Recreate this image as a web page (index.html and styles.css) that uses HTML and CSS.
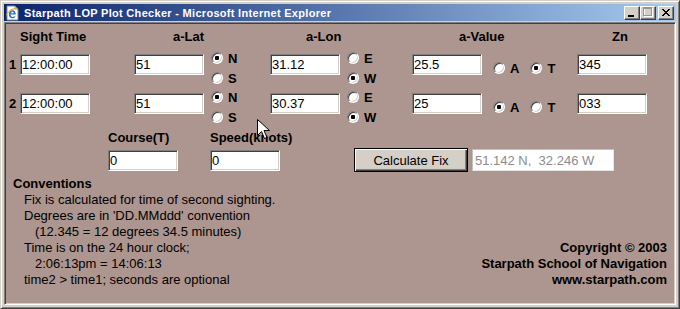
FILE: index.html
```html
<!DOCTYPE html>
<html lang="en">
<head>
  <meta charset="UTF-8">
  <meta name="viewport" content="width=device-width, initial-scale=1.0">
  <title>Starpath LOP Plot Checker</title>
  <link rel="stylesheet" href="styles.css">
</head>
<body>

  <div class="window">
    <div class="titlebar">
      <svg class="ie-icon" width="16" height="16" viewBox="0 0 16 16">
        <path d="M2 1h8l3 3v11H2z" fill="#fff" stroke="#7b8a9c"/>
        <path d="M10 1v3h3" fill="none" stroke="#7b8a9c"/>
        <path d="M4.2 9.4h6.6c0-2.6-1.4-4.2-3.4-4.2s-3.6 1.7-3.6 4c0 2.4 1.6 4 3.7 4 1.4 0 2.5-.7 3.1-1.8H8.5c-.3.4-.6.6-1.1.6-.9 0-1.6-.8-1.6-1.9 0 0 0 0 0 0zM5.9 8.3c.1-.9.7-1.5 1.5-1.5s1.4.6 1.5 1.5z" fill="#1e6fd9"/>
        <path d="M1 11c1-3 6-6.5 11-7.5-1.5-1.2-5-.5-8 2.3C2 7.6.6 9.6 1 11z" fill="#f2b01e"/>
      </svg>
      <span class="title">Starpath LOP Plot Checker - Microsoft Internet Explorer</span>
      <div class="caption-buttons">
        <span class="cap-btn">
          <svg width="14" height="12" viewBox="0 0 14 12"><rect x="3" y="8" width="6" height="2" fill="#000"/></svg>
        </span>
        <span class="cap-btn">
          <svg width="14" height="12" viewBox="0 0 14 12">
            <rect x="3.5" y="1.5" width="8" height="8" fill="none" stroke="#fff"/>
            <rect x="2.5" y="0.5" width="8" height="8" fill="none" stroke="#9a968f"/>
            <rect x="3" y="1" width="7" height="1" fill="#9a968f"/>
          </svg>
        </span>
        <span class="cap-btn close">
          <svg width="14" height="12" viewBox="0 0 14 12"><path d="M3 2l7 7M4 2l7 7M10 2l-7 7M11 2l-7 7" stroke="#000" stroke-width="1"/></svg>
        </span>
      </div>
    </div>

    <div class="content">
      <form class="sights">
        <div class="head c-time">Sight Time</div>
        <div class="head c-lat h-lat">a-Lat</div>
        <div class="head c-lon h-lon">a-Lon</div>
        <div class="head c-val h-val">a-Value</div>
        <div class="head c-zn h-zn">Zn</div>

        <div class="num c-num">1</div>
        <input class="field c-time" type="text" value="12:00:00">
        <input class="field c-lat" type="text" value="51">
        <div class="opts c-latdir">
          <label class="opt"><input type="radio" name="lat1" checked> N</label>
          <label class="opt"><input type="radio" name="lat1"> S</label>
        </div>
        <input class="field c-lon" type="text" value="31.12">
        <div class="opts c-londir">
          <label class="opt"><input type="radio" name="lon1"> E</label>
          <label class="opt"><input type="radio" name="lon1" checked> W</label>
        </div>
        <input class="field c-val" type="text" value="25.5">
        <div class="opts-row c-valtype">
          <label class="opt"><input type="radio" name="val1"> A</label>
          <label class="opt"><input type="radio" name="val1" checked> T</label>
        </div>
        <input class="field c-zn" type="text" value="345">

        <div class="num c-num">2</div>
        <input class="field c-time" type="text" value="12:00:00">
        <input class="field c-lat" type="text" value="51">
        <div class="opts c-latdir">
          <label class="opt"><input type="radio" name="lat2" checked> N</label>
          <label class="opt"><input type="radio" name="lat2"> S</label>
        </div>
        <input class="field c-lon" type="text" value="30.37">
        <div class="opts c-londir">
          <label class="opt"><input type="radio" name="lon2"> E</label>
          <label class="opt"><input type="radio" name="lon2" checked> W</label>
        </div>
        <input class="field c-val" type="text" value="25">
        <div class="opts-row c-valtype">
          <label class="opt"><input type="radio" name="val2" checked> A</label>
          <label class="opt"><input type="radio" name="val2"> T</label>
        </div>
        <input class="field c-zn" type="text" value="033">
      </form>

      <div class="course">
        <div class="head">Course(T)</div>
        <div class="head">Speed(knots)</div>
        <div></div>
        <div></div>
        <input class="field" type="text" value="0">
        <input class="field" type="text" value="0">
        <button class="calc" type="button">Calculate Fix</button>
        <input class="result" type="text" value="51.142 N,  32.246 W" readonly>
      </div>

      <div class="footer">
        <div class="conventions">
          <div class="conv-title">Conventions</div>
          <div class="ind1">Fix is calculated for time of second sighting.</div>
          <div class="ind1">Degrees are in 'DD.MMddd' convention</div>
          <div class="ind2">(12.345 = 12 degrees 34.5 minutes)</div>
          <div class="ind1">Time is on the 24 hour clock;</div>
          <div class="ind2">2:06:13pm = 14:06:13</div>
          <div class="ind1">time2 &gt; time1; seconds are optional</div>
        </div>
        <div class="copyright">
          <div>Copyright &copy; 2003</div>
          <div>Starpath School of Navigation</div>
          <div>www.starpath.com</div>
        </div>
      </div>
    </div>

    <!-- mouse pointer -->
    <svg class="pointer" width="13" height="21" viewBox="0 0 13 21">
      <path d="M.5.5v16l4-4 3 7 2.5-1-3-7h5.5z" fill="#fff" stroke="#000"/>
    </svg>
  </div>

</body>
</html>
```

FILE: styles.css
```css
body {
  margin: 0;
  padding: 0;
  font-family: "Liberation Sans", Arial, sans-serif;
  font-size: 13px;
  color: #000;
}
.window {
  position: relative;
  width: 680px;
  height: 309px;
  box-sizing: border-box;
  background: #d4d0c8;
  border: 1px solid;
  border-color: #d4d0c8 #404040 #404040 #d4d0c8;
  box-shadow: inset 1px 1px #fff, inset -1px -1px #808080;
  padding: 3px;
  display: flex;
  flex-direction: column;
}
.titlebar {
  height: 17px;
  display: flex;
  align-items: center;
  background: linear-gradient(to right, #0a246a, #a6caf0);
  color: #fff;
  margin-bottom: 1px;
}
.ie-icon {
  margin: 0 3px 0 1px;
}
.title {
  font-family: "Liberation Sans", Arial, sans-serif;
  font-weight: bold;
  font-size: 11px;
  letter-spacing: 0.3px;
  white-space: nowrap;
}
.caption-buttons {
  margin-left: auto;
  display: flex;
  margin-right: 2px;
}
.cap-btn {
  width: 16px;
  height: 14px;
  box-sizing: border-box;
  background: #d4d0c8;
  border: 1px solid;
  border-color: #fff #404040 #404040 #fff;
  box-shadow: inset -1px -1px #808080;
  display: flex;
}
.cap-btn.close {
  margin-left: 2px;
}
.content {
  flex: 1;
  background: #ad968f;
  border: 1px solid;
  border-color: #808080 #fff #fff #808080;
  box-shadow: inset 1px 1px #404040, inset -1px -1px #d4d0c8;
  padding: 6px 1px 0 1px;
}
.head {
  font-weight: bold;
  line-height: 16px;
  white-space: nowrap;
}
.sights {
  margin: 0;
  display: grid;
  grid-template-columns: 14px 70px 44px 70px 7px 59px 70px 7px 65px 70px 95px 70px;
  grid-template-rows: 19px 39px 39px;
  align-items: start;
}
.c-num { grid-column: 1; }
.c-time { grid-column: 2; }
.c-lat { grid-column: 4; }
.c-latdir { grid-column: 6; }
.c-lon { grid-column: 7; }
.c-londir { grid-column: 9; }
.c-val { grid-column: 10; }
.c-valtype { grid-column: 11; }
.c-zn { grid-column: 12; }
.h-lat { padding-left: 39px; }
.h-lon { padding-left: 36px; }
.h-val { padding-left: 47px; }
.h-zn { padding-left: 35px; }
.num {
  font-weight: bold;
  line-height: 21px;
  margin-top: 6px;
  padding-left: 3px;
}
.field {
  width: 70px;
  height: 21px;
  box-sizing: border-box;
  margin: 6px 0 0 0;
  padding: 0 1px;
  border: 1px solid;
  border-color: #808080 #fff #fff #808080;
  box-shadow: inset 1px 1px #404040, inset -1px -1px #d4d0c8;
  background: #fff;
  font-family: "Liberation Sans", Arial, sans-serif;
  font-size: 13px;
  color: #000;
  outline: none;
}
.opts {
  display: flex;
  flex-direction: column;
}
.opts-row {
  height: 40px;
  display: flex;
  align-items: center;
  padding-left: 11px;
  gap: 11px;
}
.opt {
  display: flex;
  align-items: center;
  height: 20px;
  gap: 5px;
  font-weight: bold;
}
.opt input {
  appearance: none;
  -webkit-appearance: none;
  width: 12px;
  height: 12px;
  margin: 0;
  box-sizing: border-box;
  border-radius: 50%;
  border: 1px solid;
  border-color: #808080 #fff #fff #808080;
  box-shadow: inset 1px 1px #404040, inset -1px -1px #d4d0c8;
  background: #fff;
}
.opt input:checked {
  background: radial-gradient(circle, #000 0 2px, #fff 2.5px);
}
.course {
  display: grid;
  grid-template-columns: 102px 144px 118px 142px;
  grid-template-rows: 16px 24px;
  row-gap: 2px;
  align-items: center;
  padding-left: 102px;
  margin-top: 4px;
}
.course .field {
  margin: 0;
}
.calc {
  width: 114px;
  height: 24px;
  padding: 0;
  background: #d4d0c8;
  border: 1px solid #000;
  box-shadow: inset 1px 1px #fff, inset -1px -1px #404040, inset -2px -2px #808080;
  font-family: "Liberation Sans", Arial, sans-serif;
  font-size: 13px;
  color: #000;
}
.result {
  width: 142px;
  height: 22px;
  box-sizing: border-box;
  margin: 0;
  padding: 0 2px;
  border: 1px solid;
  border-color: #c4c0bc #e8e6e2 #e8e6e2 #c4c0bc;
  background: #fff;
  font-family: "Liberation Sans", Arial, sans-serif;
  font-size: 13px;
  color: #8c8c8c;
  outline: none;
}
.footer {
  display: flex;
  justify-content: space-between;
  align-items: flex-end;
  margin-top: 4px;
  padding: 0 7px;
  line-height: 16px;
}
.conv-title {
  font-weight: bold;
}
.ind1 {
  padding-left: 11px;
}
.ind2 {
  padding-left: 22px;
}
.copyright {
  text-align: right;
  font-weight: bold;
}
.pointer {
  position: absolute;
  left: 256px;
  top: 118px;
}
```
